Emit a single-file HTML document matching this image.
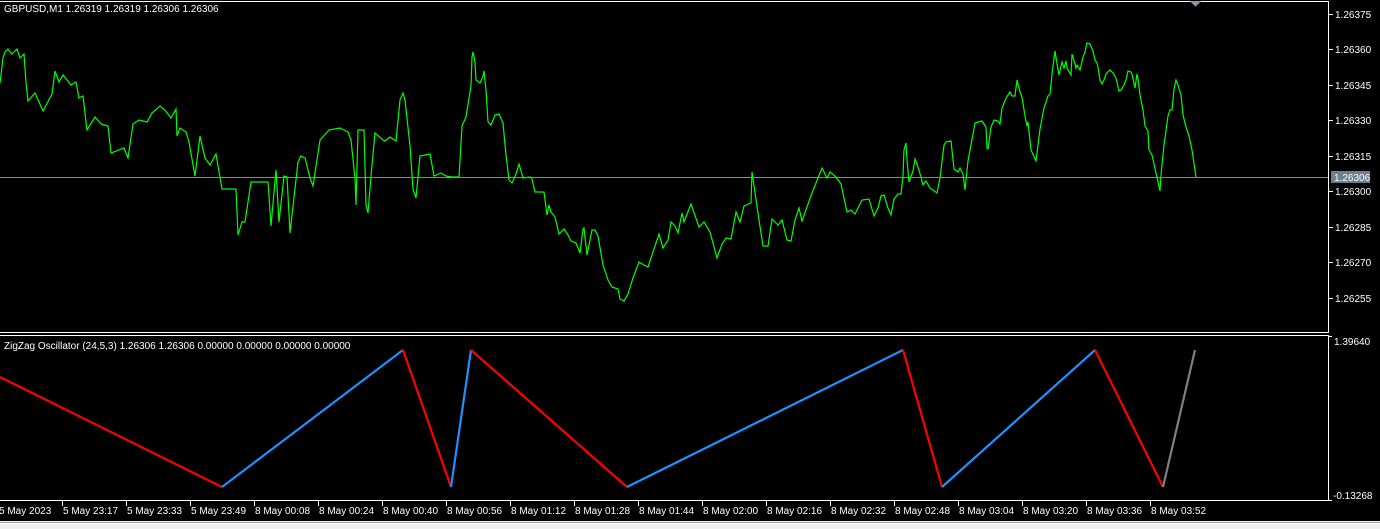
<!DOCTYPE html>
<html><head><meta charset="utf-8"><style>
html,body{margin:0;padding:0;background:#000;width:1380px;height:529px;overflow:hidden}
svg{display:block}
text{font-family:"Liberation Sans",sans-serif;font-size:10px;fill:#fff}
</style></head><body>
<svg width="1380" height="529" viewBox="0 0 1380 529" xmlns="http://www.w3.org/2000/svg" shape-rendering="crispEdges">
<rect width="1380" height="529" fill="#000"/>
<line x1="0" y1="1.5" x2="1328.5" y2="1.5" stroke="#fff"/>
<line x1="1328.5" y1="1" x2="1328.5" y2="333" stroke="#fff"/>
<line x1="0" y1="332.5" x2="1328.5" y2="332.5" stroke="#fff"/>
<polygon points="1190,1 1201,1 1195.5,7" fill="#8797a8"/>
<line x1="0" y1="177.5" x2="1328" y2="177.5" stroke="#808a94"/>
<g stroke="#fff">
<line x1="1329" y1="14.5" x2="1333" y2="14.5"/><line x1="1329" y1="49.5" x2="1333" y2="49.5"/><line x1="1329" y1="85.5" x2="1333" y2="85.5"/><line x1="1329" y1="120.5" x2="1333" y2="120.5"/><line x1="1329" y1="156.5" x2="1333" y2="156.5"/><line x1="1329" y1="191.5" x2="1333" y2="191.5"/><line x1="1329" y1="227.5" x2="1333" y2="227.5"/><line x1="1329" y1="262.5" x2="1333" y2="262.5"/><line x1="1329" y1="298.5" x2="1333" y2="298.5"/>
</g>
<g>
<text x="1335" y="18">1.26375</text><text x="1335" y="53">1.26360</text><text x="1335" y="89">1.26345</text><text x="1335" y="124">1.26330</text><text x="1335" y="160">1.26315</text><text x="1335" y="195">1.26300</text><text x="1335" y="231">1.26285</text><text x="1335" y="266">1.26270</text><text x="1335" y="302">1.26255</text>
</g>
<rect x="1331" y="171" width="39" height="12" fill="#6e7f8e"/>
<text x="1334" y="181">1.26306</text>
<text x="4" y="12">GBPUSD,M1  1.26319 1.26319 1.26306 1.26306</text>
<polyline shape-rendering="auto" fill="none" stroke="#00ff00" stroke-width="1.2" points="0,83 3,58 5,52 8,49 12,54 17,49 20,58 24,54 26,83 28,101 35,93 43,111 52,94 55,71 59,82 63,75 71,85 76,82 79,98 83,96 87,130 95,117 101,124 108,126 111,153 124,148 128,158 133,124 139,120 147,122 152,113 160,106 165,110 171,118 176,109 177,136 180,128 186,132 189,142 195,176 200,136 205,158 210,165 216,154 222,189 236,189 238,235 242,222 245,222 251,182 268,182 271,226 276,170 279,222 284,176 287,177 290,233 298,162 301,156 305,158 310,178 313,186 320,140 329,130 340,128 348,132 351,140 355,178 356,205 358,130 364,130 366,205 368,213 371,176 375,133 383,140 385,141 390,137 396,141 400,100 403,93 405,100 410,146 413,189 416,198 420,156 425,155 430,154 434,176 441,173 446,176 452,177 459,177 462,126 466,117 471,86 472,57 473,52 475,62 476,80 480,83 483,76 484,71 486,90 488,122 491,125 495,115 499,114 503,123 506,155 509,180 512,183 516,174 519,164 523,178 530,177 532,179 535,192 544,192 547,215 549,205 551,212 555,217 559,234 564,229 568,235 571,241 576,243 580,253 583,229 584,228 587,255 592,230 595,230 598,236 603,265 608,280 612,287 618,289 620,299 624,301 628,294 633,278 639,262 644,265 648,267 652,255 659,234 663,248 668,240 671,222 675,226 678,233 682,213 684,222 691,204 699,227 704,222 710,232 717,258 722,244 726,238 731,239 736,212 740,222 744,206 751,203 752,172 759,220 763,246 768,246 772,219 778,225 782,220 787,240 791,241 795,220 799,208 802,221 812,193 822,168 827,178 830,172 836,177 841,184 847,212 851,210 855,214 862,200 869,199 874,216 878,208 881,196 884,195 888,208 891,215 894,199 898,194 901,194 903,176 904,150 906,143 907,160 909,182 913,171 915,159 917,164 921,177 923,185 926,181 930,188 937,193 940,178 944,145 946,142 951,141 954,169 958,172 960,168 963,174 965,190 968,161 975,123 982,121 986,127 987,148 988,149 991,127 994,120 998,121 1000,124 1002,108 1006,98 1010,92 1012,96 1015,96 1017,80 1020,92 1022,97 1025,116 1027,126 1028,122 1031,150 1036,161 1040,129 1044,108 1048,96 1050,94 1052,74 1055,51 1057,64 1059,75 1062,62 1064,68 1066,61 1067,68 1071,75 1072,54 1075,64 1076,68 1077,65 1080,70 1083,57 1085,52 1087,43 1090,44 1093,51 1095,60 1097,63 1098,67 1100,80 1102,84 1104,80 1106,74 1110,70 1113,73 1116,78 1119,91 1121,90 1124,85 1126,80 1128,71 1131,72 1132,74 1135,88 1137,74 1138,79 1140,95 1143,110 1145,126 1148,131 1149,150 1152,155 1156,173 1160,191 1161,175 1164,145 1168,116 1170,110 1172,110 1174,89 1176,80 1178,85 1181,95 1183,115 1186,127 1189,136 1192,150 1195,170 1196,177"/>
<line x1="0" y1="335.5" x2="1328.5" y2="335.5" stroke="#fff"/>
<line x1="1328.5" y1="335" x2="1328.5" y2="501" stroke="#fff"/>
<line x1="0" y1="500.5" x2="1328.5" y2="500.5" stroke="#fff"/>
<line x1="1329" y1="336.5" x2="1332" y2="336.5" stroke="#fff"/>
<line x1="1329" y1="500.5" x2="1332" y2="500.5" stroke="#fff"/>
<text x="1334" y="345">1.39640</text>
<text x="1333" y="499">-0.13268</text>
<text x="4" y="349">ZigZag Oscillator (24,5,3) 1.26306 1.26306 0.00000 0.00000 0.00000 0.00000</text>
<g shape-rendering="auto" fill="none" stroke-width="2.2">
<polyline stroke="#ff0000" points="0,377 222,487"/>
<polyline stroke="#1e90ff" points="222,487 403,350"/>
<polyline stroke="#ff0000" points="403,350 451,487"/>
<polyline stroke="#1e90ff" points="451,487 471,350"/>
<polyline stroke="#ff0000" points="471,350 627,487"/>
<polyline stroke="#1e90ff" points="627,487 903,350"/>
<polyline stroke="#ff0000" points="903,350 942,487"/>
<polyline stroke="#1e90ff" points="942,487 1095,350"/>
<polyline stroke="#ff0000" points="1095,350 1163,487"/>
<polyline stroke="#808080" points="1163,487 1195,350"/>
</g>
<g stroke="#fff">
<line x1="62.5" y1="501" x2="62.5" y2="506"/><line x1="126.5" y1="501" x2="126.5" y2="506"/><line x1="190.5" y1="501" x2="190.5" y2="506"/><line x1="254.5" y1="501" x2="254.5" y2="506"/><line x1="318.5" y1="501" x2="318.5" y2="506"/><line x1="382.5" y1="501" x2="382.5" y2="506"/><line x1="446.5" y1="501" x2="446.5" y2="506"/><line x1="510.5" y1="501" x2="510.5" y2="506"/><line x1="574.5" y1="501" x2="574.5" y2="506"/><line x1="638.5" y1="501" x2="638.5" y2="506"/><line x1="702.5" y1="501" x2="702.5" y2="506"/><line x1="766.5" y1="501" x2="766.5" y2="506"/><line x1="830.5" y1="501" x2="830.5" y2="506"/><line x1="894.5" y1="501" x2="894.5" y2="506"/><line x1="958.5" y1="501" x2="958.5" y2="506"/><line x1="1022.5" y1="501" x2="1022.5" y2="506"/><line x1="1086.5" y1="501" x2="1086.5" y2="506"/><line x1="1150.5" y1="501" x2="1150.5" y2="506"/>
</g>
<g>
<text x="-1" y="514">5 May 2023</text><text x="63" y="514">5 May 23:17</text><text x="127" y="514">5 May 23:33</text><text x="191" y="514">5 May 23:49</text><text x="255" y="514">8 May 00:08</text><text x="319" y="514">8 May 00:24</text><text x="383" y="514">8 May 00:40</text><text x="447" y="514">8 May 00:56</text><text x="511" y="514">8 May 01:12</text><text x="575" y="514">8 May 01:28</text><text x="639" y="514">8 May 01:44</text><text x="703" y="514">8 May 02:00</text><text x="767" y="514">8 May 02:16</text><text x="831" y="514">8 May 02:32</text><text x="895" y="514">8 May 02:48</text><text x="959" y="514">8 May 03:04</text><text x="1023" y="514">8 May 03:20</text><text x="1087" y="514">8 May 03:36</text><text x="1151" y="514">8 May 03:52</text>
</g>
<rect x="0" y="521" width="1380" height="8" fill="#f0f0f0"/>
<line x1="0" y1="522.5" x2="1380" y2="522.5" stroke="#a0a0a0"/>
<line x1="0" y1="523.5" x2="1380" y2="523.5" stroke="#ffffff"/>
</svg>
</body></html>
